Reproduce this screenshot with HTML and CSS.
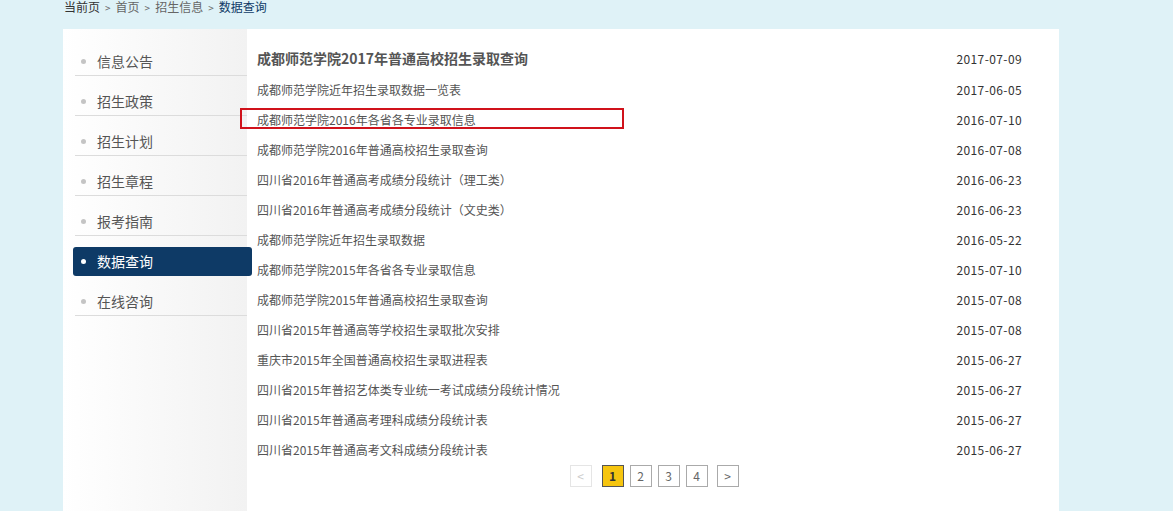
FILE: index.html
```html
<!DOCTYPE html>
<html lang="zh-CN">
<head>
<meta charset="utf-8">
<title>数据查询</title>
<link rel="stylesheet" href="styles.css">
</head>
<body>
<div class="crumb"><span class="c-first">当前页</span><span class="sep">&gt;</span><span class="c-mid">首页</span><span class="sep">&gt;</span><span class="c-mid">招生信息</span><span class="sep">&gt;</span><span class="c-cur">数据查询</span></div>
<div class="wrap">
  <div class="side">
    <div class="item"><i class="dot"></i>信息公告</div>
    <div class="item"><i class="dot"></i>招生政策</div>
    <div class="item"><i class="dot"></i>招生计划</div>
    <div class="item"><i class="dot"></i>招生章程</div>
    <div class="item"><i class="dot"></i>报考指南</div>
    <div class="item active"><i class="dot"></i>数据查询</div>
    <div class="item"><i class="dot"></i>在线咨询</div>
  </div>
  <div class="main">
    <div class="mark"></div>
    <div class="row title"><span class="t">成都师范学院2017年普通高校招生录取查询</span><span class="d">2017-07-09</span></div>
    <div class="row"><span class="t">成都师范学院近年招生录取数据一览表</span><span class="d">2017-06-05</span></div>
    <div class="row"><span class="t">成都师范学院2016年各省各专业录取信息</span><span class="d">2016-07-10</span></div>
    <div class="row"><span class="t">成都师范学院2016年普通高校招生录取查询</span><span class="d">2016-07-08</span></div>
    <div class="row"><span class="t">四川省2016年普通高考成绩分段统计（理工类）</span><span class="d">2016-06-23</span></div>
    <div class="row"><span class="t">四川省2016年普通高考成绩分段统计（文史类）</span><span class="d">2016-06-23</span></div>
    <div class="row"><span class="t">成都师范学院近年招生录取数据</span><span class="d">2016-05-22</span></div>
    <div class="row"><span class="t">成都师范学院2015年各省各专业录取信息</span><span class="d">2015-07-10</span></div>
    <div class="row"><span class="t">成都师范学院2015年普通高校招生录取查询</span><span class="d">2015-07-08</span></div>
    <div class="row"><span class="t">四川省2015年普通高等学校招生录取批次安排</span><span class="d">2015-07-08</span></div>
    <div class="row"><span class="t">重庆市2015年全国普通高校招生录取进程表</span><span class="d">2015-06-27</span></div>
    <div class="row"><span class="t">四川省2015年普招艺体类专业统一考试成绩分段统计情况</span><span class="d">2015-06-27</span></div>
    <div class="row"><span class="t">四川省2015年普通高考理科成绩分段统计表</span><span class="d">2015-06-27</span></div>
    <div class="row"><span class="t">四川省2015年普通高考文科成绩分段统计表</span><span class="d">2015-06-27</span></div>
    <div class="pager">
      <span class="pg dis">&lt;</span>
      <span class="pg cur">1</span>
      <span class="pg">2</span>
      <span class="pg">3</span>
      <span class="pg">4</span>
      <span class="pg next">&gt;</span>
    </div>
  </div>
</div>
</body>
</html>
```
FILE: styles.css
```css
html, body {
  margin: 0;
  padding: 0;
  background: #dff2f7;
  font-family: "Noto Sans CJK SC", "Noto Sans", sans-serif;
  height: 100%;
  overflow: hidden;
}
.crumb {
  padding-left: 64px;
  font-size: 12px;
  line-height: 14px;
  height: 29px;
  color: #666;
}
.c-first { color: #333; }
.c-mid { color: #666; }
.c-cur { color: #0e3a66; }
.sep {
  display: inline-block;
  margin: 0 5px;
  font-size: 10px;
  color: #666;
}
.wrap {
  margin-left: 63px;
  width: 996px;
  height: 482px;
  background: #fff;
  display: flex;
}
.side {
  width: 184px;
  flex: none;
  background: linear-gradient(to right, #ffffff, #f2f2f2);
  padding: 7px 0 0 12px;
  box-sizing: border-box;
}
.item {
  margin-top: 10px;
  height: 30px;
  line-height: 29px;
  padding-top: 2px;
  border-bottom: 1px solid #dcdcdc;
  font-size: 14px;
  color: #555;
  display: flex;
  align-items: center;
  padding-left: 22px;
  box-sizing: border-box;
}
.dot {
  width: 5px;
  height: 5px;
  border-radius: 50%;
  background: #c4c4c4;
  margin-left: -16px;
  margin-right: 11px;
}
.item.active {
  background: #0e3a66;
  color: #fff;
  border-radius: 3px;
  border-bottom: 0;
  margin-left: -2px;
  margin-right: -5px;
  padding-left: 24px;
  line-height: 29px;
  height: 29px;
  margin-top: 11px;
  padding-top: 0;
}
.item.active .dot { background: #fff; }
.main {
  flex: 1;
  position: relative;
  padding: 13px 37px 0 10px;
}
.row {
  display: flex;
  justify-content: space-between;
  height: 30px;
  line-height: 30px;
  font-size: 12px;
  color: #555;
}
.row.title {
  height: 33px;
  line-height: 33px;
  font-size: 14px;
  font-weight: bold;
}
.row .d {
  color: #333;
  font-weight: normal;
  font-size: 12px;
  letter-spacing: 0.4px;
}
.mark {
  position: absolute;
  left: -7px;
  top: 79px;
  width: 380px;
  height: 17px;
  border: 2px solid #d0121b;
}
.pager {
  display: flex;
  justify-content: center;
  gap: 6px;
  padding-left: 29px;
}
.pg {
  width: 20px;
  height: 20px;
  line-height: 20px;
  text-align: center;
  border: 1px solid #aaa;
  font-size: 12px;
  color: #666;
}
.pg.dis {
  border-color: #e5e5e5;
  color: #ccc;
  margin-right: 4px;
}
.pg.cur {
  background: #f6c50f;
  border-color: #555;
  color: #333;
  font-weight: bold;
}
.pg.next { margin-left: 3px; }
```
